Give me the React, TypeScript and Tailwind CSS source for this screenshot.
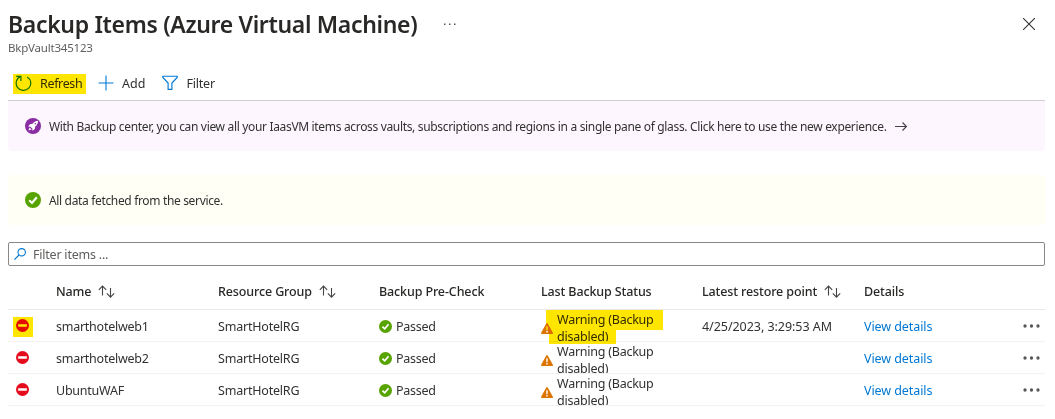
import React from "react";

const GRID =
  "grid grid-cols-[48px_162px_161px_162px_161px_162px_1fr] items-center";

function RefreshIcon() {
  return (
    <svg className="mb-[2px] h-[17px] w-[17px]" viewBox="0 0 17 17" fill="none" stroke="#107c10" strokeWidth="1.2">
      <path d="M12.3 1.9A7.300 7.300 0 1 1 5.600 1.400" />
      <path d="M1.200 1.300H5.900V5.900" />
    </svg>
  );
}

function PlusIcon() {
  return (
    <svg className="mb-[2px] h-4 w-4" viewBox="0 0 16 16" fill="none" stroke="#0078d4">
      <path d="M8 .5V15.5M.5 8H15.5" strokeWidth="1.1" />
    </svg>
  );
}

function FunnelIcon() {
  return (
    <svg className="mb-[2px] h-4 w-4" viewBox="0 0 16 16" fill="none" stroke="#0078d4" strokeWidth="1.15">
      <path d="M.8 1.2H15.2V2.4L9.9 8V14.3H6.1V8L.8 2.4Z" />
    </svg>
  );
}

function CheckIcon({ className }: { className: string }) {
  return (
    <svg className={className} viewBox="0 0 16 16">
      <circle cx="8" cy="8" r="8" fill="#57a300" />
      <path d="M4.2 8.2 7 10.9 11.8 5.2" fill="none" stroke="#fff" strokeWidth="2.1" />
    </svg>
  );
}

function RocketIcon() {
  return (
    <svg className="h-4 w-4 shrink-0" viewBox="0 0 16 16">
      <circle cx="8" cy="8" r="8" fill="#8a2da5" />
      <path
        d="M13.200 2.800C11 2.900 9 3.800 7.500 5.700L5 6.200 3.200 8.500 5.400 8.800 7.200 10.600 7.500 12.800 9.800 11 10.300 8.500C12.200 7 13.100 5 13.200 2.800ZM4.600 9.400 3.400 12.600 6.600 11.400Z"
        fill="#fff"
      />
      <circle cx="10.300" cy="5.700" r=".8" fill="#8a2da5" />
    </svg>
  );
}

function StopIcon() {
  return (
    <svg className="h-[13px] w-[13px]" viewBox="0 0 13 13">
      <circle cx="6.5" cy="6.5" r="6.5" fill="#e50b1c" />
      <rect x="2.1" y="5.2" width="8.8" height="2.5" rx=".6" fill="#fff" />
    </svg>
  );
}

function WarningIcon() {
  return (
    <svg className="mt-[5px] h-[11px] w-3 shrink-0" viewBox="0 0 12 11">
      <path d="M5.3.5a.8.8 0 0 1 1.4 0L11.9 9.800a.8.8 0 0 1-.7 1.200H.8a.8.8 0 0 1-.7-1.200Z" fill="#dd7400" />
      <path d="M6 3.300V7.200M6 8.100V9.500" stroke="#fff" strokeWidth="1.4" />
    </svg>
  );
}

function SortIcon() {
  return (
    <svg className="h-[13px] w-[17px]" viewBox="0 0 17 13" fill="none" stroke="#444" strokeWidth="1.1">
      <path d="M4.500 10.500V1.200M.8 4.800 4.500 1.100 8.200 4.800" />
      <path d="M12.500 3V12M8.800 8.400 12.500 12.100 16.200 8.400" />
    </svg>
  );
}

function RowMenu() {
  return (
    <svg className="mb-[2px] h-1 w-[17px]" viewBox="0 0 17 4" fill="#555">
      <circle cx="2" cy="2" r="1.650" />
      <circle cx="8.500" cy="2" r="1.650" />
      <circle cx="15" cy="2" r="1.650" />
    </svg>
  );
}

function HeaderCell({ label, sortable }: { label: string; sortable?: boolean }) {
  return (
    <div className="flex items-center gap-[7px] whitespace-nowrap text-[12.5px] font-medium tracking-[-0.12px] text-[#292827]">
      <span>{label}</span>
      {sortable && <SortIcon />}
    </div>
  );
}

interface Item {
  name: string;
  restorePoint?: string;
  marked?: boolean;
}

const items: Item[] = [
  { name: "smarthotelweb1", restorePoint: "4/25/2023, 3:29:53 AM", marked: true },
  { name: "smarthotelweb2" },
  { name: "UbuntuWAF" },
];

function ItemRow({ name, restorePoint, marked }: Item) {
  return (
    <div className={`${GRID} relative h-8 whitespace-nowrap border-b border-[#f3f2f1]`}>
      <div className="pl-2">
        <StopIcon />
      </div>
      <div className="pt-[2px] tracking-[-0.25px]">{name}</div>
      <div className="pt-[2px] tracking-[-0.2px]">SmartHotelRG</div>
      <div className="flex items-center gap-1 pt-[2px] tracking-[-0.28px]">
        <CheckIcon className="h-[13px] w-[13px]" />
        <span>Passed</span>
      </div>
      <div className="flex h-[31px] items-center gap-1 overflow-hidden">
        <WarningIcon />
        <div className="h-[31px] w-[110px] whitespace-normal pt-[1px] leading-[17px] tracking-[-0.24px]">
          Warning (Backup disabled)
        </div>
      </div>
      <div className="pt-[2px] tracking-[-0.05px]">{restorePoint}</div>
      <div className="flex items-center justify-between pr-[5px] pt-[2px] tracking-[-0.08px]">
        <a className="text-[#0078d4]">View details</a>
        <RowMenu />
      </div>
      {marked && (
        <>
          <i className="absolute left-[5px] top-[7px] h-5 w-5 bg-[#ffe600] mix-blend-multiply" />
          <i className="absolute left-[538px] top-0 h-5 w-[117px] bg-[#ffe600] mix-blend-multiply" />
          <i className="absolute left-[541px] top-5 h-[14px] w-[67px] bg-[#ffe600] mix-blend-multiply" />
        </>
      )}
    </div>
  );
}

export default function App() {
  return (
    <main className="h-[419px] w-[1055px] overflow-hidden bg-white pl-2 pr-[10px] font-['Noto_Sans','Open_Sans',sans-serif] text-[12.5px] leading-[17px] text-[#323130]">
      <header className="flex h-[57px] justify-between">
        <div>
          <div className="flex items-center pt-2">
            <h1 className="whitespace-nowrap text-[23px] font-semibold leading-8 tracking-[-0.33px] text-[#292827]">
              Backup Items (Azure Virtual Machine)
            </h1>
            <svg className="ml-[27px] h-[3px] w-3" viewBox="0 0 12 3" fill="#555">
              <path d="M0 .5H1.500V2H0ZM5 .5H6.500V2H5ZM10 .5H11.500V2H10Z" />
            </svg>
          </div>
          <div className="text-[11.5px] leading-4 tracking-[-0.2px] text-[#605e5c]">BkpVault345123</div>
        </div>
        <svg className="mr-[10px] mt-[18px] h-3 w-3" viewBox="0 0 12 12" stroke="#333" strokeWidth="1.1">
          <path d="M0 0 12 12M12 0 0 12" />
        </svg>
      </header>

      <div className="flex h-[44px] items-center border-b border-[#d2d0ce] pt-[11px]">
        <button className="relative ml-[7px] flex h-5 w-[69px] items-center gap-[8px]">
          <RefreshIcon />
          <span className="pb-[2px] tracking-[-0.35px]">Refresh</span>
          <i className="absolute -left-[2px] top-0 h-5 w-[73px] bg-[#ffe600] mix-blend-multiply" />
        </button>
        <button className="ml-[14px] flex items-center gap-2">
          <PlusIcon />
          <span className="pb-[2px]">Add</span>
        </button>
        <button className="ml-[17px] flex items-center gap-2">
          <FunnelIcon />
          <span className="pb-[2px] tracking-[-0.2px]">Filter</span>
        </button>
      </div>

      <section className="flex h-[50px] items-center gap-2 whitespace-nowrap rounded-b-sm bg-[#fdf6ff] pl-[17px] text-[12px]">
        <RocketIcon />
        <span className="tracking-[-0.33px]">
          With Backup center, you can view all your IaasVM items across vaults, subscriptions and regions in a single
          pane of glass. Click here to use the new experience.
        </span>
        <svg className="h-[9px] w-3" viewBox="0 0 12 9" fill="none" stroke="#444" strokeWidth="1.2">
          <path d="M0 4.500H11.500M7.500 .5 11.500 4.500 7.500 8.500" />
        </svg>
      </section>

      <section className="mt-6 flex h-[50px] items-center gap-2 rounded-sm bg-[#fffff5] pl-[17px] text-[12px]">
        <CheckIcon className="h-4 w-4" />
        <span className="tracking-[-0.34px]">All data fetched from the service.</span>
      </section>

      <label className="mt-[17px] flex h-6 items-center gap-[7px] rounded-[2px] border border-[#8a8886] pl-[5px] text-[#605e5c]">
        <svg className="h-3 w-3" viewBox="0 0 12 12" fill="none" stroke="#0078d4" strokeWidth="1.1">
          <circle cx="7.700" cy="4.300" r="3.700" />
          <path d="M5 7 .4 11.600" />
        </svg>
        <span className="tracking-[-0.22px]">Filter items ...</span>
      </label>

      <div className={`${GRID} h-[44px] border-b border-[#e9e8e7] pt-[8px]`}>
        <span />
        <HeaderCell label="Name" sortable />
        <HeaderCell label="Resource Group" sortable />
        <HeaderCell label="Backup Pre-Check" />
        <HeaderCell label="Last Backup Status" />
        <HeaderCell label="Latest restore point" sortable />
        <HeaderCell label="Details" />
      </div>
      {items.map((item) => (
        <ItemRow key={item.name} {...item} />
      ))}
    </main>
  );
}
